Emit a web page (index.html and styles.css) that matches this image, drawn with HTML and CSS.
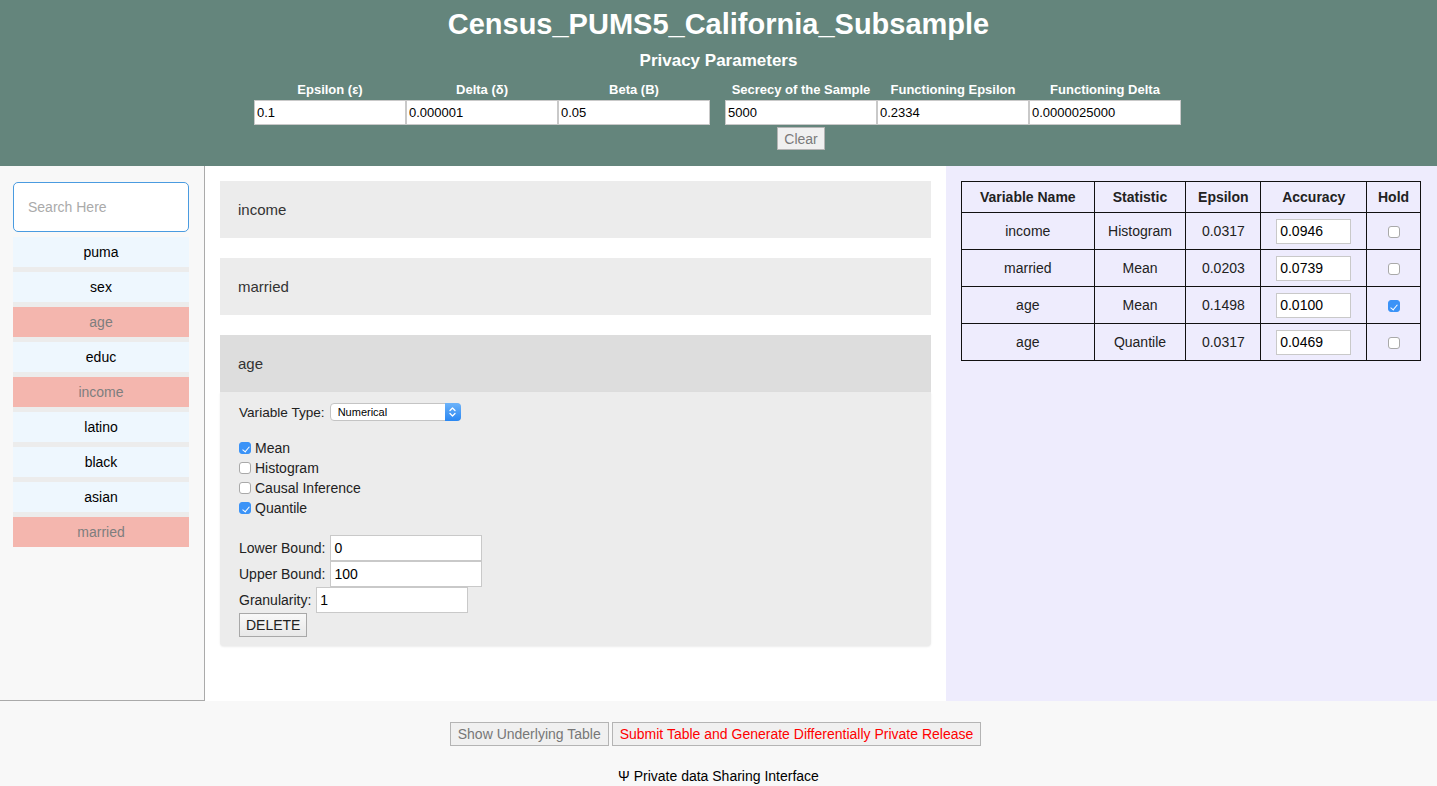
FILE: index.html
```html
<!DOCTYPE html>
<html>
<head>
<meta charset="utf-8">
<link rel="stylesheet" href="styles.css">
</head>
<body>
<header class="top">
  <h1 class="title">Census_PUMS5_California_Subsample</h1>
  <h2 class="subtitle">Privacy Parameters</h2>
  <div class="params">
    <div class="pgroup">
      <label class="plabel">Epsilon (ε)</label>
      <label class="plabel">Delta (δ)</label>
      <label class="plabel">Beta (Β)</label>
      <input class="pinput" type="text" value="0.1">
      <input class="pinput" type="text" value="0.000001">
      <input class="pinput" type="text" value="0.05">
    </div>
    <div class="pgroup">
      <label class="plabel">Secrecy of the Sample</label>
      <label class="plabel">Functioning Epsilon</label>
      <label class="plabel">Functioning Delta</label>
      <input class="pinput" type="text" value="5000">
      <input class="pinput" type="text" value="0.2334">
      <input class="pinput" type="text" value="0.0000025000">
      <div class="clear-cell"><button class="btn clear">Clear</button></div>
    </div>
  </div>
</header>

<main class="main">
  <aside class="sidebar">
    <input class="search" type="text" placeholder="Search Here">
    <ul class="varlist">
      <li class="var">puma</li>
      <li class="var">sex</li>
      <li class="var selected">age</li>
      <li class="var">educ</li>
      <li class="var selected">income</li>
      <li class="var">latino</li>
      <li class="var">black</li>
      <li class="var">asian</li>
      <li class="var selected">married</li>
    </ul>
  </aside>

  <section class="center">
    <div class="panel">
      <div class="panel-head">income</div>
    </div>
    <div class="panel">
      <div class="panel-head">married</div>
    </div>
    <div class="panel open">
      <div class="panel-head">age</div>
      <div class="panel-body">
        <div class="type-row">
          <span class="type-label">Variable Type:</span>
          <div class="select">
            <span class="select-text">Numerical</span>
            <span class="select-arrow">
              <svg width="9" height="12" viewBox="0 0 9 12"><path d="M2 4.5 L4.5 2 L7 4.5 M2 7.5 L4.5 10 L7 7.5" fill="none" stroke="#fff" stroke-width="1.3" stroke-linecap="round" stroke-linejoin="round"/></svg>
            </span>
          </div>
        </div>
        <div class="checks">
          <label class="check"><input type="checkbox" class="cb" checked> Mean</label>
          <label class="check"><input type="checkbox" class="cb"> Histogram</label>
          <label class="check"><input type="checkbox" class="cb"> Causal Inference</label>
          <label class="check"><input type="checkbox" class="cb" checked> Quantile</label>
        </div>
        <div class="bounds">
          <div class="bound">Lower Bound: <input class="binput" type="text" value="0"></div>
          <div class="bound">Upper Bound: <input class="binput" type="text" value="100"></div>
          <div class="bound">Granularity: <input class="binput" type="text" value="1"></div>
        </div>
        <button class="btn delete">DELETE</button>
      </div>
    </div>
  </section>

  <section class="right">
    <table class="stats">
      <thead>
        <tr><th class="c1">Variable Name</th><th class="c2">Statistic</th><th class="c3">Epsilon</th><th class="c4">Accuracy</th><th class="c5">Hold</th></tr>
      </thead>
      <tbody>
        <tr><td>income</td><td>Histogram</td><td>0.0317</td><td><input class="acc" type="text" value="0.0946"></td><td><input type="checkbox" class="cb"></td></tr>
        <tr><td>married</td><td>Mean</td><td>0.0203</td><td><input class="acc" type="text" value="0.0739"></td><td><input type="checkbox" class="cb"></td></tr>
        <tr><td>age</td><td>Mean</td><td>0.1498</td><td><input class="acc" type="text" value="0.0100"></td><td><input type="checkbox" class="cb" checked></td></tr>
        <tr><td>age</td><td>Quantile</td><td>0.0317</td><td><input class="acc" type="text" value="0.0469"></td><td><input type="checkbox" class="cb"></td></tr>
      </tbody>
    </table>
  </section>
</main>

<footer class="footer">
  <div class="actions">
    <button class="btn show">Show Underlying Table</button>
    <button class="btn submit">Submit Table and Generate Differentially Private Release</button>
  </div>
  <p class="credit">Ψ Private data Sharing Interface</p>
</footer>
</body>
</html>
```

FILE: styles.css
```css
* { box-sizing: border-box; }

html, body {
  margin: 0;
  padding: 0;
}

body {
  font-family: "Liberation Sans", Arial, Helvetica, sans-serif;
  color: #111;
  background: #f8f8f8;
  width: 1437px;
  height: 786px;
  overflow: hidden;
}

/* ---------- header ---------- */
.top {
  height: 166px;
  background: #64857c;
  color: #fff;
  text-align: center;
  padding-top: 7px;
}

.title {
  margin: 0;
  font-size: 29px;
  line-height: 34px;
  font-weight: bold;
}

.subtitle {
  margin: 10px 0 0;
  font-size: 17px;
  line-height: 20px;
  font-weight: bold;
}

.params {
  display: flex;
  justify-content: center;
  gap: 15px;
  margin-top: 11px;
  padding-right: 2px;
}

.pgroup {
  display: grid;
  grid-template-columns: 152px 152px 152px;
  row-gap: 2px;
  align-content: start;
}

.plabel {
  font-size: 13px;
  line-height: 16px;
  font-weight: bold;
  color: #fff;
  white-space: nowrap;
}

.pinput {
  width: 152px;
  height: 25px;
  border: 1px solid #c9c9c9;
  background: #fff;
  font-family: "Liberation Sans", Arial, sans-serif;
  font-size: 13px;
  color: #000;
  padding: 0 2px;
  margin: 0;
}

.clear-cell {
  text-align: center;
}

.btn {
  font-family: "Liberation Sans", Arial, sans-serif;
  font-size: 14px;
  background: #f0f0f0;
  border: 1px solid #b4b4b4;
  border-radius: 0;
  margin: 0;
  cursor: pointer;
}

.clear {
  height: 23px;
  width: 48px;
  padding: 0;
  color: #7a7a7a;
}

/* ---------- main ---------- */
.main {
  display: flex;
  height: 535px;
}

.sidebar {
  width: 205px;
  flex: none;
  background: #f8f8f8;
  border-right: 1px solid #aaa;
  border-bottom: 1px solid #aaa;
  padding: 16px 0 0 13px;
}

.search {
  display: block;
  width: 176px;
  height: 50px;
  border: 1px solid #4a9be0;
  border-radius: 5px;
  background: #fff;
  padding: 0 14px;
  font-family: "Liberation Sans", Arial, sans-serif;
  font-size: 14px;
  outline: none;
}

.search::placeholder {
  color: #aaa;
}

.varlist {
  list-style: none;
  margin: 5px 0 0;
  padding: 0;
  width: 176px;
  display: flex;
  flex-direction: column;
  gap: 5px;
  background: #ececec;
}

.var {
  height: 30px;
  line-height: 30px;
  text-align: center;
  font-size: 14px;
  background: #eef7fe;
  color: #000;
}

.var.selected {
  background: #f4b6ae;
  color: #7e7e7e;
}

.center {
  flex: 1;
  background: #fff;
  padding: 15px;
}

.panel {
  margin-bottom: 20px;
  width: 711px;
}

.panel-head {
  height: 57px;
  line-height: 57px;
  padding-left: 18px;
  font-size: 15px;
  color: #333;
  background: #ececec;
}

.panel.open .panel-head {
  background: #dddddd;
}

.panel-body {
  background: #ececec;
  padding: 10px 19px 9px;
  border-radius: 0 0 4px 4px;
  box-shadow: 0 1px 2px rgba(0, 0, 0, 0.08);
}

.type-row {
  display: flex;
  align-items: center;
  height: 20px;
  gap: 5px;
}

.type-label {
  font-size: 13.6px;
  color: #222;
}

.select {
  position: relative;
  width: 131px;
  height: 18px;
  background: #fff;
  border: 1px solid #c4c4c4;
  border-radius: 4px;
  display: flex;
  align-items: center;
  padding-left: 7px;
}

.select-text {
  font-size: 11px;
  color: #000;
}

.select-arrow {
  position: absolute;
  right: -1px;
  top: -1px;
  width: 16px;
  height: 18px;
  border-radius: 0 4px 4px 0;
  background: linear-gradient(#6cb3fa, #2a87f2);
  display: flex;
  align-items: center;
  justify-content: center;
}

.checks {
  margin-top: 16px;
  display: flex;
  flex-direction: column;
}

.check {
  display: flex;
  align-items: center;
  height: 20px;
  font-size: 14px;
  color: #222;
  gap: 4px;
}

.cb {
  appearance: none;
  -webkit-appearance: none;
  width: 12px;
  height: 12px;
  margin: 0;
  border: 1px solid #a9a9a9;
  border-radius: 3px;
  background: #fff;
  position: relative;
  flex: none;
}

.cb:checked {
  background: #3b93f7;
  border-color: #3b93f7;
}

.cb:checked::after {
  content: "";
  position: absolute;
  left: 3.5px;
  top: 1.5px;
  width: 3px;
  height: 6px;
  border: solid #fff;
  border-width: 0 1.5px 1.5px 0;
  transform: rotate(40deg);
}

.bounds {
  margin-top: 17px;
}

.bound {
  display: flex;
  align-items: center;
  gap: 5px;
  height: 26px;
  font-size: 14px;
  color: #222;
}

.binput {
  width: 152px;
  height: 26px;
  border: 1px solid #c9c9c9;
  background: #fff;
  font-family: "Liberation Sans", Arial, sans-serif;
  font-size: 14px;
  padding: 0 3px;
  margin: 0;
}

.delete {
  height: 24px;
  padding: 0 6px;
  color: #222;
  background: linear-gradient(#f8f8f8, #e8e8e8);
  border: 1px solid #a8a8a8;
}

.right {
  width: 491px;
  flex: none;
  background: #eeecfd;
  padding: 15px;
}

.stats {
  border-collapse: collapse;
  width: 460px;
  font-size: 14px;
  color: #222;
}

.stats th,
.stats td {
  border: 1px solid #111;
  text-align: center;
  padding: 0;
}

.stats th {
  height: 31px;
  font-weight: bold;
}

.stats td {
  height: 37px;
}

.c1 { width: 133px; }
.c2 { width: 92px; }
.c3 { width: 75px; }
.c4 { width: 106px; }
.c5 { width: 54px; }

.acc {
  width: 75px;
  height: 25px;
  border: 1px solid #c9c9c9;
  background: #fff;
  font-family: "Liberation Sans", Arial, sans-serif;
  font-size: 14px;
  padding: 0 3px;
  margin: 0;
  vertical-align: middle;
}

.stats .cb {
  vertical-align: middle;
}

/* ---------- footer ---------- */
.footer {
  height: 86px;
  background: #f8f8f8;
  text-align: center;
  padding-top: 21px;
}

.actions {
  display: flex;
  justify-content: center;
  gap: 3px;
  padding-right: 6px;
}

.show,
.submit {
  height: 24px;
  padding: 0 7px;
}

.show {
  color: #777;
}

.submit {
  color: #f00;
}

.credit {
  margin: 20px 0 0;
  font-size: 14px;
  line-height: 20px;
  color: #000;
}
```
